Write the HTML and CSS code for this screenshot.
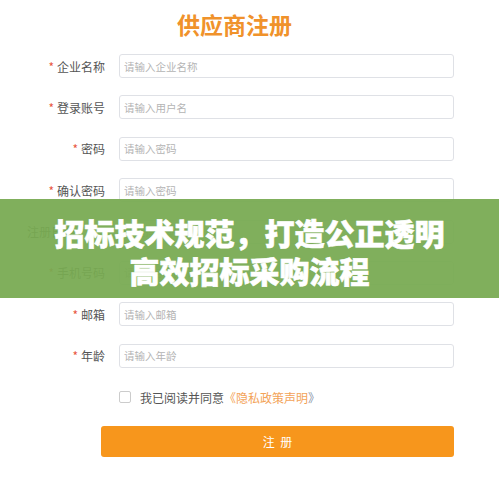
FILE: index.html
```html
<!DOCTYPE html>
<html lang="zh-CN">
<head>
    <meta charset="UTF-8">
    <meta name="viewport" content="width=device-width, initial-scale=1.0">
    <title>供应商注册</title>
    <link rel="stylesheet" href="styles.css">
</head>
<body>
    <div class="page">
        <h1 class="title">供应商注册</h1>
        <form class="form">
            <div class="row">
                <label class="label"><span class="star">*</span>企业名称</label>
                <input class="field" type="text" placeholder="请输入企业名称">
            </div>
            <div class="row">
                <label class="label"><span class="star">*</span>登录账号</label>
                <input class="field" type="text" placeholder="请输入用户名">
            </div>
            <div class="row">
                <label class="label"><span class="star">*</span>密码</label>
                <input class="field" type="password" placeholder="请输入密码">
            </div>
            <div class="row">
                <label class="label"><span class="star">*</span>确认密码</label>
                <input class="field" type="password" placeholder="请输入密码">
            </div>
            <div class="row">
                <label class="label label-left">注册日期</label>
                <input class="field" type="text" placeholder="请选择日期">
            </div>
            <div class="row">
                <label class="label"><span class="star">*</span>手机号码</label>
                <input class="field" type="text" placeholder="请输入手机号码">
            </div>
            <div class="row">
                <label class="label"><span class="star">*</span>邮箱</label>
                <input class="field" type="text" placeholder="请输入邮箱">
            </div>
            <div class="row">
                <label class="label"><span class="star">*</span>年龄</label>
                <input class="field" type="text" placeholder="请输入年龄">
            </div>
            <div class="agree">
                <span class="check"></span>
                <span class="agree-text">我已阅读并同意<span class="link">《隐私政策声明</span><span class="bracket">》</span></span>
            </div>
            <button class="submit" type="button">注&nbsp;&nbsp;册</button>
        </form>
        <div class="banner">
            <p>招标技术规范，打造公正透明</p>
            <p>高效招标采购流程</p>
        </div>
    </div>
</body>
</html>
```

FILE: styles.css
```css
* {
    margin: 0;
    padding: 0;
    box-sizing: border-box;
}
body {
    font-family: "Noto Sans CJK SC", "Noto Sans", sans-serif;
    background: #fff;
    width: 499px;
    height: 501px;
    overflow: hidden;
}
.page {
    position: relative;
    width: 499px;
    height: 501px;
}
.title {
    text-align: center;
    font-size: 23px;
    line-height: 26px;
    font-weight: bold;
    color: #f0922b;
    padding: 11px 30px 0 0;
    height: 54px;
}
.form {
    display: flex;
    flex-direction: column;
    gap: 17.4px;
}
.row {
    display: flex;
    align-items: center;
    height: 24px;
}
.label {
    width: 119px;
    padding-right: 14px;
    text-align: right;
    font-size: 12px;
    color: #555;
}
.label-left {
    text-align: left;
    padding-left: 27px;
}
.star {
    color: #e8573f;
    margin-right: 3px;
}
.field {
    width: 335px;
    height: 24px;
    border: 1px solid #dfe1e6;
    border-radius: 3px;
    padding-left: 4px;
    font-family: inherit;
    font-size: 10.5px;
    color: #555;
}
.field::placeholder {
    color: #b4b4b4;
}
.agree {
    display: flex;
    align-items: center;
    padding-left: 119px;
    height: 14px;
    margin-top: 5px;
}
.check {
    width: 12px;
    height: 12px;
    border: 1px solid #ccc;
    border-radius: 2px;
    margin-right: 9px;
}
.agree-text {
    font-size: 12px;
    color: #555;
}
.link {
    color: #f3a358;
}
.bracket {
    color: #8a95a8;
}
.submit {
    margin: 4px 0 0 101px;
    width: 353px;
    height: 31px;
    background: #f7961c;
    border: none;
    border-radius: 3px;
    color: #fff;
    font-family: inherit;
    font-size: 12px;
}
.banner {
    position: absolute;
    left: 0;
    top: 199px;
    width: 499px;
    height: 99px;
    padding-top: 14px;
    background: rgba(120, 170, 82, 0.94);
    color: #fff;
    text-align: center;
    font-size: 30px;
    line-height: 38px;
    font-weight: 900;
    -webkit-text-stroke: 0.6px #fff;
}
```
